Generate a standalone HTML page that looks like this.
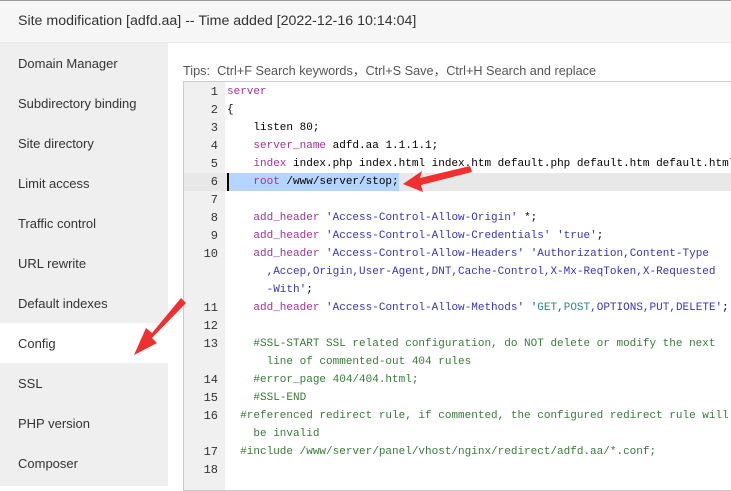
<!DOCTYPE html>
<html><head><meta charset="utf-8"><style>
*{margin:0;padding:0;box-sizing:border-box}
body{width:731px;height:486px;overflow:hidden;background:#fff;font-family:"Liberation Sans",sans-serif;position:relative}
.hdr{position:absolute;left:0;top:0;width:731px;height:43px;background:#f6f6f6;border-top:1px solid #999;border-bottom:1px solid #eaeaea;font-size:14.2px;color:#333;padding:12px 0 0 18px;white-space:nowrap}
.side{position:absolute;left:0;top:43px;width:168px;height:443px;background:#efefef}
.side div{height:40px;line-height:42px;padding-left:18px;font-size:13px;color:#333}
.side .act{background:#fff}
.tips{position:absolute;left:183px;top:60px;font-size:12.7px;color:#555;white-space:nowrap}
.ed{position:absolute;left:183px;top:81px;width:560px;height:410px;border:1px solid #ccc;border-right:none;overflow:hidden;background:#fff}
.in{position:absolute;left:0;top:1px;width:560px;height:410px}
.gut{position:absolute;left:0;top:0;width:41px;height:420px;background:#f0f0f0}
.ln{position:absolute;left:0;width:548px;height:18px;font-family:"Liberation Mono",monospace;font-size:11px;line-height:18px;white-space:pre;color:#000}
.ln .n{position:absolute;left:0;width:34px;text-align:right;color:#333;font-size:12px}
.ln .c{position:absolute;left:43px}
.k{color:#a0329a}.s{color:#3636b0}.cm{color:#3a7a3a}.t{color:#2a8a8a}
</style></head><body>
<div class="hdr">Site modification [adfd.aa] -- Time added [2022-12-16 10:14:04]</div>
<div class="side">
<div>Domain Manager</div><div>Subdirectory binding</div><div>Site directory</div><div>Limit access</div><div>Traffic control</div><div>URL rewrite</div><div>Default indexes</div><div class="act">Config</div><div>SSL</div><div>PHP version</div><div>Composer</div>
</div>
<div class="tips">Tips:&nbsp; Ctrl+F Search keywords，Ctrl+S Save，Ctrl+H Search and replace</div>
<div class="ed"><div class="gut"></div><div class="in">
<div style="position:absolute;left:0;top:90px;width:560px;height:18px;background:#e8e8e8"></div>
<div style="position:absolute;left:43px;top:90px;width:172px;height:18px;background:#b5d5ff"></div>
<div style="position:absolute;left:43px;top:90px;width:2px;height:18px;background:#000"></div>
<div class="ln" style="top:0"><span class="n">1</span><span class="c"><span class="k">server</span></span></div>
<div class="ln" style="top:18px"><span class="n">2</span><span class="c">{</span></div>
<div class="ln" style="top:36px"><span class="n">3</span><span class="c">    listen 80;</span></div>
<div class="ln" style="top:54px"><span class="n">4</span><span class="c">    <span class="k">server_name</span> adfd.aa 1.1.1.1;</span></div>
<div class="ln" style="top:72px"><span class="n">5</span><span class="c">    <span class="k">index</span> index.php index.html index.htm default.php default.htm default.html;</span></div>
<div class="ln" style="top:90px"><span class="n">6</span><span class="c">    <span class="k">root</span> /www/server/stop;</span></div>
<div class="ln" style="top:108px"><span class="n">7</span></div>
<div class="ln" style="top:126px"><span class="n">8</span><span class="c">    <span class="k">add_header</span> <span class="s">'Access-Control-Allow-Origin'</span> *;</span></div>
<div class="ln" style="top:144px"><span class="n">9</span><span class="c">    <span class="k">add_header</span> <span class="s">'Access-Control-Allow-Credentials'</span> <span class="s">'true'</span>;</span></div>
<div class="ln" style="top:162px"><span class="n">10</span><span class="c">    <span class="k">add_header</span> <span class="s">'Access-Control-Allow-Headers'</span> <span class="s">'Authorization,Content-Type</span></span></div>
<div class="ln" style="top:180px"><span class="c"><span class="s">      ,Accep,Origin,User-Agent,DNT,Cache-Control,X-Mx-ReqToken,X-Requested</span></span></div>
<div class="ln" style="top:198px"><span class="c"><span class="s">      -With'</span>;</span></div>
<div class="ln" style="top:216px"><span class="n">11</span><span class="c">    <span class="k">add_header</span> <span class="s">'Access-Control-Allow-Methods'</span> <span class="s">'<span class="t">GET</span>,<span class="t">POST</span>,OPTIONS,PUT,DELETE'</span>;</span></div>
<div class="ln" style="top:234px"><span class="n">12</span></div>
<div class="ln" style="top:252px"><span class="n">13</span><span class="c cm">    #SSL-START SSL related configuration, do NOT delete or modify the next</span></div>
<div class="ln" style="top:270px"><span class="c cm">      line of commented-out 404 rules</span></div>
<div class="ln" style="top:288px"><span class="n">14</span><span class="c cm">    #error_page 404/404.html;</span></div>
<div class="ln" style="top:306px"><span class="n">15</span><span class="c cm">    #SSL-END</span></div>
<div class="ln" style="top:324px"><span class="n">16</span><span class="c cm">  #referenced redirect rule, if commented, the configured redirect rule will</span></div>
<div class="ln" style="top:342px"><span class="c cm">    be invalid</span></div>
<div class="ln" style="top:360px"><span class="n">17</span><span class="c cm">  #include /www/server/panel/vhost/nginx/redirect/adfd.aa/*.conf;</span></div>
<div class="ln" style="top:378px"><span class="n">18</span></div>
</div></div>
<svg style="position:absolute;left:0;top:0" width="731" height="486">
<polygon points="470,166 420,178 422,171 403,184 423,192 421,185 472,172" fill="#f03030"/>
<polygon points="181,298 152,333 146,328 134,355 157,343 152,338 186,303" fill="#f03030"/>
</svg>
</body></html>
